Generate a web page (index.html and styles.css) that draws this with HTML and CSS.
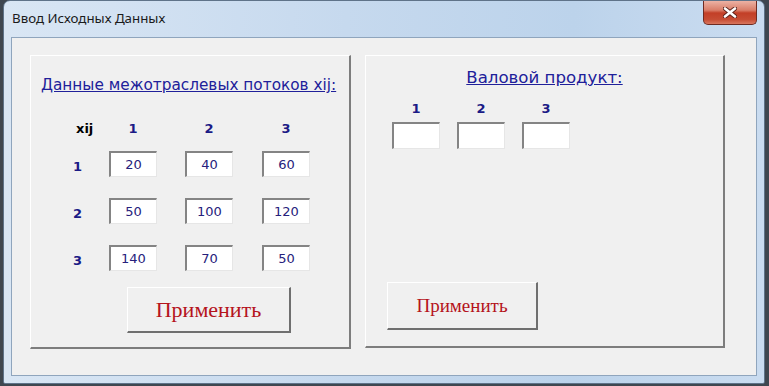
FILE: index.html
```html
<!DOCTYPE html>
<html lang="ru">
<head>
    <meta charset="UTF-8">
    <meta name="viewport" content="width=device-width, initial-scale=1.0">
    <title>Ввод Исходных Данных</title>
    <link rel="stylesheet" href="styles.css">
</head>
<body>
    <div class="window">
        <div class="titlebar">
            <span class="title">Ввод Исходных Данных</span>
            <button class="close" type="button" aria-label="Закрыть">
                <svg width="14" height="11" viewBox="0 0 14 11">
                    <path d="M2 1.5 L12 9.5 M12 1.5 L2 9.5" stroke="#5a2018" stroke-width="4.4" stroke-linecap="round"/>
                    <path d="M2 1.5 L12 9.5 M12 1.5 L2 9.5" stroke="#ffffff" stroke-width="2.6" stroke-linecap="round"/>
                </svg>
            </button>
        </div>

        <div class="client">
            <section class="group group-flows">
                <h2 class="group-title">Данные межотраслевых потоков xij:</h2>

                <div class="matrix">
                    <div class="matrix-row matrix-head">
                        <span class="corner">xij</span>
                        <span class="col-label">1</span>
                        <span class="col-label">2</span>
                        <span class="col-label">3</span>
                    </div>
                    <div class="matrix-row">
                        <span class="row-label">1</span>
                        <input class="cell" type="text" value="20">
                        <input class="cell" type="text" value="40">
                        <input class="cell" type="text" value="60">
                    </div>
                    <div class="matrix-row">
                        <span class="row-label">2</span>
                        <input class="cell" type="text" value="50">
                        <input class="cell" type="text" value="100">
                        <input class="cell" type="text" value="120">
                    </div>
                    <div class="matrix-row">
                        <span class="row-label">3</span>
                        <input class="cell" type="text" value="140">
                        <input class="cell" type="text" value="70">
                        <input class="cell" type="text" value="50">
                    </div>
                </div>

                <button class="apply apply-flows" type="button">Применить</button>
            </section>

            <section class="group group-gross">
                <h2 class="group-title centered">Валовой продукт:</h2>

                <div class="gross">
                    <label class="gross-item">
                        <span class="col-label">1</span>
                        <input class="cell" type="text">
                    </label>
                    <label class="gross-item">
                        <span class="col-label">2</span>
                        <input class="cell" type="text">
                    </label>
                    <label class="gross-item">
                        <span class="col-label">3</span>
                        <input class="cell" type="text">
                    </label>
                </div>

                <button class="apply apply-gross" type="button">Применить</button>
            </section>
        </div>
    </div>
</body>
</html>
```

FILE: styles.css
```css
* {
    margin: 0;
    padding: 0;
    box-sizing: border-box;
}

body {
    background-color: #3f4750;
    width: 769px;
    height: 386px;
    overflow: hidden;
}

.window {
    margin-left: 3px;
    width: 762px;
    height: 384px;
    border: 1px solid #5f7389;
    border-radius: 7px 7px 2px 2px;
    background: linear-gradient(to right, #d9e6f4 0%, #c6d9ee 45%, #bcd3eb 75%, #cadcf0 100%);
}

/* Barra de título */
.titlebar {
    height: 36px;
    display: flex;
    justify-content: space-between;
    align-items: flex-start;
}

.title {
    font-family: 'Noto Sans', sans-serif;
    font-size: 13.3px;
    color: #1b1b1b;
    padding: 8px 0 0 8px;
}

.close {
    width: 54px;
    height: 24px;
    margin-right: 7px;
    border: 1px solid #6e2b22;
    border-top: none;
    border-radius: 0 0 5px 5px;
    background: linear-gradient(#ecb2a4 0%, #d97d68 40%, #c33f27 52%, #c64c33 80%, #d9765e 100%);
    display: flex;
    justify-content: center;
    align-items: center;
}

/* Área de cliente */
.client {
    margin-left: 7px;
    width: 746px;
    height: 339px;
    border: 1px solid #8fa5bd;
    background-color: #f0f0f0;
    display: flex;
    gap: 14px;
    padding: 17px 0 0 18px;
}

.group {
    border-top: 1px solid #ffffff;
    border-left: 1px solid #ffffff;
    border-right: 2px solid #7d7d7d;
    border-bottom: 2px solid #7d7d7d;
    display: flex;
    flex-direction: column;
    align-items: flex-start;
}

.group-flows {
    width: 321px;
    height: 294px;
}

.group-gross {
    width: 360px;
    height: 293px;
}

.group-title {
    font-family: 'DejaVu Sans', sans-serif;
    font-weight: normal;
    font-size: 15.3px;
    line-height: 18px;
    color: #20209a;
    text-decoration: underline;
    margin: 20px 0 0 10px;
}

.group-title.centered {
    align-self: center;
    font-size: 16.6px;
    margin: 13px 0 0 0;
}

/* Matriz xij */
.matrix {
    margin: 24px 0 0 42px;
}

.matrix-row {
    display: grid;
    grid-template-columns: 36px 76px 77px 48px;
    height: 26px;
    align-items: center;
}

.matrix-row + .matrix-row {
    margin-top: 21px;
}

.matrix-head {
    height: 20px;
}

.matrix-head + .matrix-row {
    margin-top: 13px;
}

.corner {
    font-family: 'DejaVu Sans', sans-serif;
    font-weight: bold;
    font-size: 13px;
    color: #000000;
    padding-left: 3px;
}

.col-label,
.row-label {
    font-family: 'DejaVu Sans', sans-serif;
    font-weight: bold;
    font-size: 13px;
    color: #1b1b86;
}

.col-label {
    width: 48px;
    text-align: center;
}

.row-label {
    padding-top: 5px;
}

.cell {
    width: 48px;
    height: 26px;
    background-color: #ffffff;
    border-top: 2px solid #848484;
    border-left: 2px solid #848484;
    border-right: 1px solid #e6e6e6;
    border-bottom: 1px solid #e6e6e6;
    font-family: 'DejaVu Sans', sans-serif;
    font-size: 13px;
    color: #26217c;
    text-align: center;
    outline: none;
}

/* Valor bruto */
.gross {
    display: flex;
    gap: 17px;
    margin: 15px 0 0 26px;
}

.gross-item {
    display: flex;
    flex-direction: column;
    gap: 6px;
}

.gross-item .col-label {
    line-height: 14px;
}

.gross-item .cell {
    height: 27px;
}

/* Botones */
.apply {
    background-color: #f0f0f0;
    border-top: 1px solid #ffffff;
    border-left: 1px solid #ffffff;
    border-right: 2px solid #6f6f6f;
    border-bottom: 2px solid #6f6f6f;
    font-family: 'Liberation Serif', serif;
    color: #b5141c;
    cursor: pointer;
}

.apply-flows {
    width: 164px;
    height: 46px;
    margin: 16px 0 0 96px;
    font-size: 22px;
}

.apply-gross {
    width: 151px;
    height: 48px;
    margin: 133px 0 0 21px;
    font-size: 19px;
}
```
